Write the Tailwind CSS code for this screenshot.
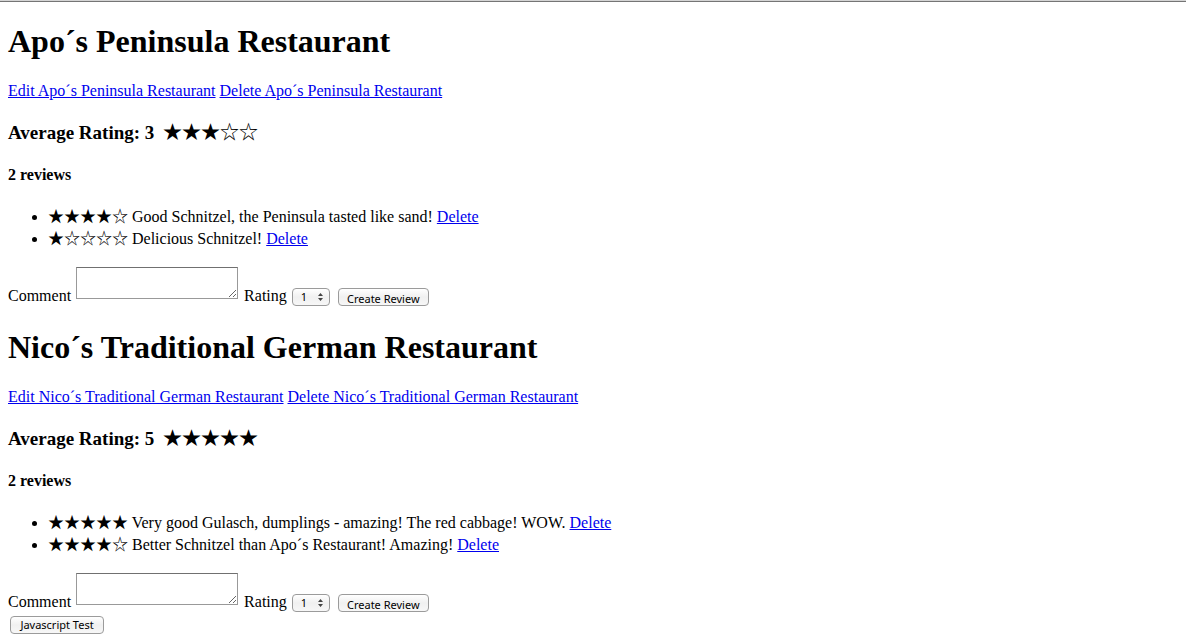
<!DOCTYPE html>
<html lang="en">
<head>
<meta charset="utf-8">
<meta name="viewport" content="width=device-width, initial-scale=1">
<title>Restaurants</title>
<script src="https://cdn.jsdelivr.net/npm/@tailwindcss/browser@4"></script>
</head>
<body class="bg-white font-['Liberation_Serif','Noto_Sans_CJK_JP',serif] text-base/5 text-black">
<div class="h-[2px] border-b border-[#757575] bg-[#d4d4d4]"></div>
<main class="px-2 pt-[21px]">
  <section class="mb-[23px]">
    <h1 class="text-[32px]/9 font-bold">Apo´s Peninsula Restaurant</h1>
    <p class="mt-[22px]"><a href="#" class="text-[#0000ee] underline">Edit Apo´s Peninsula Restaurant</a> <a href="#" class="text-[#0000ee] underline">Delete Apo´s Peninsula Restaurant</a></p>
    <h3 class="mt-5 text-[19px]/6 font-bold">Average Rating: 3 <span class="ml-1 font-normal">★★★☆☆</span></h3>
    <h4 class="mt-5 font-bold">2 reviews</h4>
    <ul class="mt-[21px] list-disc pl-10 leading-[22px]">
      <li>★★★★☆ Good Schnitzel, the Peninsula tasted like sand! <a href="#" class="text-[#0000ee] underline">Delete</a></li>
      <li>★☆☆☆☆ Delicious Schnitzel! <a href="#" class="text-[#0000ee] underline">Delete</a></li>
    </ul>
    <form class="mt-[17px] flex items-end">
      <label for="comment-1">Comment</label>
      <textarea id="comment-1" class="mb-[7px] ml-[5px] h-8 w-[162px] border border-[#999] border-t-[#707070] bg-white"></textarea>
      <label for="rating-1" class="ml-[6px]">Rating</label>
      <span class="relative ml-[5px] flex">
        <select id="rating-1" class="h-[18px] w-[38px] appearance-none rounded-[4px] border border-[#9b9b9b] bg-linear-to-b from-white via-[#f0f0f0] to-[#f7f7f7] pl-2 font-['Noto_Sans',sans-serif] text-[11px]/4"><option>1</option><option>2</option><option>3</option><option>4</option><option>5</option></select>
        <svg class="pointer-events-none absolute top-[5px] right-[7px]" width="5" height="8" viewBox="0 0 5 8" fill="#444" aria-hidden="true"><path d="M2.5 0 5 3H0zM0 5h5L2.5 8z"/></svg>
      </span>
      <button type="button" class="ml-2 h-[18px] w-[91px] rounded-[4px] border border-[#9b9b9b] bg-linear-to-b from-white via-[#f0f0f0] to-[#f7f7f7] pt-0.5 font-['Noto_Sans',sans-serif] text-[11px]/4 whitespace-nowrap">Create Review</button>
    </form>
  </section>
  <section>
    <h1 class="text-[32px]/9 font-bold">Nico´s Traditional German Restaurant</h1>
    <p class="mt-[22px]"><a href="#" class="text-[#0000ee] underline">Edit Nico´s Traditional German Restaurant</a> <a href="#" class="text-[#0000ee] underline">Delete Nico´s Traditional German Restaurant</a></p>
    <h3 class="mt-5 text-[19px]/6 font-bold">Average Rating: 5 <span class="ml-1 font-normal">★★★★★</span></h3>
    <h4 class="mt-5 font-bold">2 reviews</h4>
    <ul class="mt-[21px] list-disc pl-10 leading-[22px]">
      <li>★★★★★ Very good Gulasch, dumplings - amazing! The red cabbage! WOW. <a href="#" class="text-[#0000ee] underline">Delete</a></li>
      <li>★★★★☆ Better Schnitzel than Apo´s Restaurant! Amazing! <a href="#" class="text-[#0000ee] underline">Delete</a></li>
    </ul>
    <form class="mt-[17px] flex items-end">
      <label for="comment-2">Comment</label>
      <textarea id="comment-2" class="mb-[7px] ml-[5px] h-8 w-[162px] border border-[#999] border-t-[#707070] bg-white"></textarea>
      <label for="rating-2" class="ml-[6px]">Rating</label>
      <span class="relative ml-[5px] flex">
        <select id="rating-2" class="h-[18px] w-[38px] appearance-none rounded-[4px] border border-[#9b9b9b] bg-linear-to-b from-white via-[#f0f0f0] to-[#f7f7f7] pl-2 font-['Noto_Sans',sans-serif] text-[11px]/4"><option>1</option><option>2</option><option>3</option><option>4</option><option>5</option></select>
        <svg class="pointer-events-none absolute top-[5px] right-[7px]" width="5" height="8" viewBox="0 0 5 8" fill="#444" aria-hidden="true"><path d="M2.5 0 5 3H0zM0 5h5L2.5 8z"/></svg>
      </span>
      <button type="button" class="ml-2 h-[18px] w-[91px] rounded-[4px] border border-[#9b9b9b] bg-linear-to-b from-white via-[#f0f0f0] to-[#f7f7f7] pt-0.5 font-['Noto_Sans',sans-serif] text-[11px]/4 whitespace-nowrap">Create Review</button>
    </form>
  </section>
  <button type="button" class="mt-1 ml-[2px] block h-[18px] w-[94px] rounded-[4px] border border-[#9b9b9b] bg-linear-to-b from-white via-[#f0f0f0] to-[#f7f7f7] font-['Noto_Sans',sans-serif] text-[11px]/4 whitespace-nowrap">Javascript Test</button>
</main>
</body>
</html>
